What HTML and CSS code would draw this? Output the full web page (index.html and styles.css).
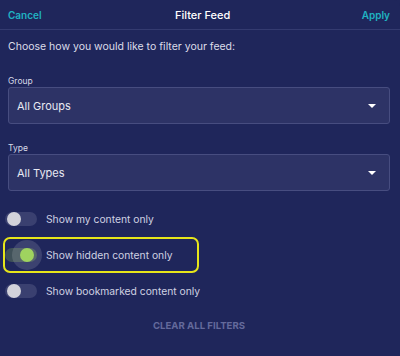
FILE: index.html
```html
<!DOCTYPE html>
<html lang="en">
<head>
  <meta charset="UTF-8" />
  <title>Filter Feed</title>
  <link rel="stylesheet" href="styles.css">
</head>
<body>
  <div class="sheet">
    <div class="header">
      <span class="hdr-btn">Cancel</span>
      <span class="hdr-title">Filter Feed</span>
      <span class="hdr-btn">Apply</span>
    </div>

    <div class="body">
      <p class="intro">Choose how you would like to filter your feed:</p>

      <div class="field">
        <label class="field-label">Group</label>
        <div class="select">
          <span>All Groups</span>
          <span class="caret"></span>
        </div>
      </div>

      <div class="field">
        <label class="field-label">Type</label>
        <div class="select">
          <span>All Types</span>
          <span class="caret"></span>
        </div>
      </div>

      <div class="toggles">
        <div class="toggle-row">
          <span class="switch"><span class="knob"></span></span>
          <span class="toggle-text">Show my content only</span>
        </div>
        <div class="toggle-row highlight">
          <span class="switch on"><span class="knob"></span></span>
          <span class="toggle-text">Show hidden content only</span>
        </div>
        <div class="toggle-row">
          <span class="switch"><span class="knob"></span></span>
          <span class="toggle-text">Show bookmarked content only</span>
        </div>
      </div>

      <div class="clear">CLEAR ALL FILTERS</div>
    </div>
  </div>
</body>
</html>
```

FILE: styles.css
```css
html, body {
  margin: 0; padding: 0;
  background: #1f265b;
}
body {
  font-family: Inter, "Noto Sans", sans-serif;
  color: #d9dbe8;
}
.sheet {
  width: 400px; height: 356px;
  background: #1f265b;
  border-radius: 0 6px 6px 0;
  overflow: hidden;
}
.header {
  height: 29px;
  display: flex; justify-content: space-between; align-items: center;
  padding: 0 10px 0 8px;
  border-bottom: 1px solid #343b70;
}
.hdr-btn {
  color: #1fb3c2; font-weight: 600; font-size: 10px;
}
.hdr-title {
  color: #fff; font-weight: 500; font-size: 11px;
  margin-left: 2px;
}
.body {
  padding: 0 10px 0 8px;
}
.intro {
  margin: 10px 0 0; font-size: 10.5px; line-height: 14px;
  color: #dcdde9;
}
.field {
  margin-top: 22px;
}
.field + .field { margin-top: 19px; }
.field-label {
  display: block; font-size: 8.5px; line-height: 11px;
  color: #d9dbe8;
}
.select {
  box-sizing: border-box;
  height: 37px;
  display: flex; align-items: center; justify-content: space-between;
  padding: 0 13px 0 8px;
  background: #2d3366;
  border: 1px solid #474d80;
  border-radius: 3px;
  font-size: 11px; color: #e8e9f2;
}
.caret {
  width: 0; height: 0;
  border-left: 4px solid transparent;
  border-right: 4px solid transparent;
  border-top: 4px solid #fff;
}
.toggles {
  margin-top: 10px;
  margin-left: -5px;
  display: flex; flex-direction: column;
}
.toggle-row {
  box-sizing: border-box;
  height: 36px; width: 196px;
  display: flex; align-items: center;
  border: 2px solid transparent;
  border-radius: 7px;
  white-space: nowrap;
}
.toggle-row.highlight {
  border-color: #e6e51a;
}
.switch {
  position: relative;
  width: 32px; height: 14px;
  border-radius: 7px;
  background: #3a4070;
  margin-right: 9px;
  flex: none;
}
.knob {
  position: absolute; top: 0; left: 2px;
  width: 14px; height: 14px; border-radius: 50%;
  background: #d2d2da;
}
.switch.on { background: #3f5058; }
.switch.on .knob {
  left: 15px; background: #9fd35f;
  box-shadow: 0 0 0 8px rgba(255,255,255,0.13);
}
.toggle-text {
  font-size: 10.3px; color: #cfd1e2;
}
.clear {
  margin-top: 11px;
  line-height: 12px;
  text-align: center;
  font-size: 9.6px; font-weight: 700;
  color: #646a9b;
}
```
